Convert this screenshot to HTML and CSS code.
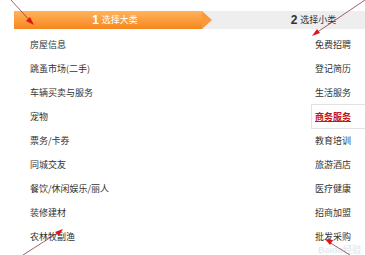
FILE: index.html
```html
<!DOCTYPE html>
<html lang="zh">
<head>
<meta charset="utf-8">
<link rel="stylesheet" href="styles.css">
</head>
<body>
<div class="page">
  <div class="steps">
    <div class="step step-active"><b>1</b> 选择大类</div>
    <div class="step step-next"><b>2</b> 选择小类</div>
  </div>
  <div class="lists">
    <ul class="col col-left">
      <li>房屋信息</li>
      <li>跳蚤市场(二手)</li>
      <li>车辆买卖与服务</li>
      <li>宠物</li>
      <li>票务/卡券</li>
      <li>同城交友</li>
      <li>餐饮/休闲娱乐/丽人</li>
      <li>装修建材</li>
      <li>农林牧副渔</li>
    </ul>
    <ul class="col col-right">
      <li>免费招聘</li>
      <li>登记简历</li>
      <li>生活服务</li>
      <li class="sel">商务服务</li>
      <li>教育培训</li>
      <li>旅游酒店</li>
      <li>医疗健康</li>
      <li>招商加盟</li>
      <li>批发采购</li>
    </ul>
  </div>
  <div class="watermark">Baidu经验</div>
  <svg class="marks" width="365" height="255" viewBox="0 0 365 255">
    <g stroke="#8a3b3b" stroke-width="0.8" fill="none">
      <line x1="11" y1="0" x2="31" y2="22"/>
      <line x1="365" y1="0" x2="316" y2="33"/>
      <line x1="23" y1="255" x2="59" y2="232"/>
      <line x1="350" y1="255" x2="329" y2="242"/>
    </g>
    <g fill="#e0141a">
      <polygon points="34,25 26,21 30,17"/>
      <polygon points="312,36 317,29 320,33"/>
      <polygon points="63,229 59,236 55,232"/>
      <polygon points="325,239 333,240 330,245"/>
    </g>
  </svg>
</div>
</body>
</html>
```
FILE: styles.css
```css
* { box-sizing: border-box; }
html, body { margin: 0; padding: 0; background: #fff; }
body {
  font-family: "Noto Sans CJK SC", "Liberation Sans", sans-serif;
  font-size: 9px;
  color: #333;
}
.page {
  position: relative;
  width: 365px;
  height: 255px;
  overflow: hidden;
  padding-top: 11px;
}
.steps {
  display: flex;
  height: 18px;
  margin-left: 14px;
  background: #eeeeee;
}
.step {
  display: flex;
  align-items: center;
  justify-content: center;
  line-height: 18px;
}
.step b { font-family: "Liberation Sans", sans-serif; font-size: 12px; margin-right: 3px; }
.step-active {
  position: relative;
  width: 188px;
  color: #fff;
  background: linear-gradient(#ffb35c, #f6861e);
  padding-left: 14px;
}
.step-active::after {
  content: "";
  position: absolute;
  right: -10px;
  top: 0;
  border-left: 10px solid #f89a3a;
  border-top: 9px solid transparent;
  border-bottom: 9px solid transparent;
}
.step-next {
  flex: 1;
  color: #333;
  padding-left: 60px;
}
.lists {
  display: flex;
  justify-content: space-between;
  margin-top: 4px;
}
.col { list-style: none; margin: 0; padding: 0; }
.col li {
  height: 24px;
  line-height: 24px;
  white-space: nowrap;
}
.col-left { padding-left: 30px; }
.col-right { width: 54px; }
.col-right li { padding-left: 4px; }
.col-right li.sel {
  height: 25px;
  margin-top: -1px;
  border: 1px solid #e2e2e2;
  border-right: none;
  padding-left: 3px;
  color: #c4161c;
  font-weight: bold;
  text-decoration: underline;
  background: #fff;
}
.watermark {
  position: absolute;
  right: 4px;
  bottom: 0;
  font-family: "Liberation Sans", "Noto Sans CJK SC", sans-serif;
  font-size: 9px;
  line-height: 9px;
  font-weight: bold;
  color: rgba(200, 215, 230, 0.5);
}
.marks { position: absolute; left: 0; top: 0; pointer-events: none; }
```
